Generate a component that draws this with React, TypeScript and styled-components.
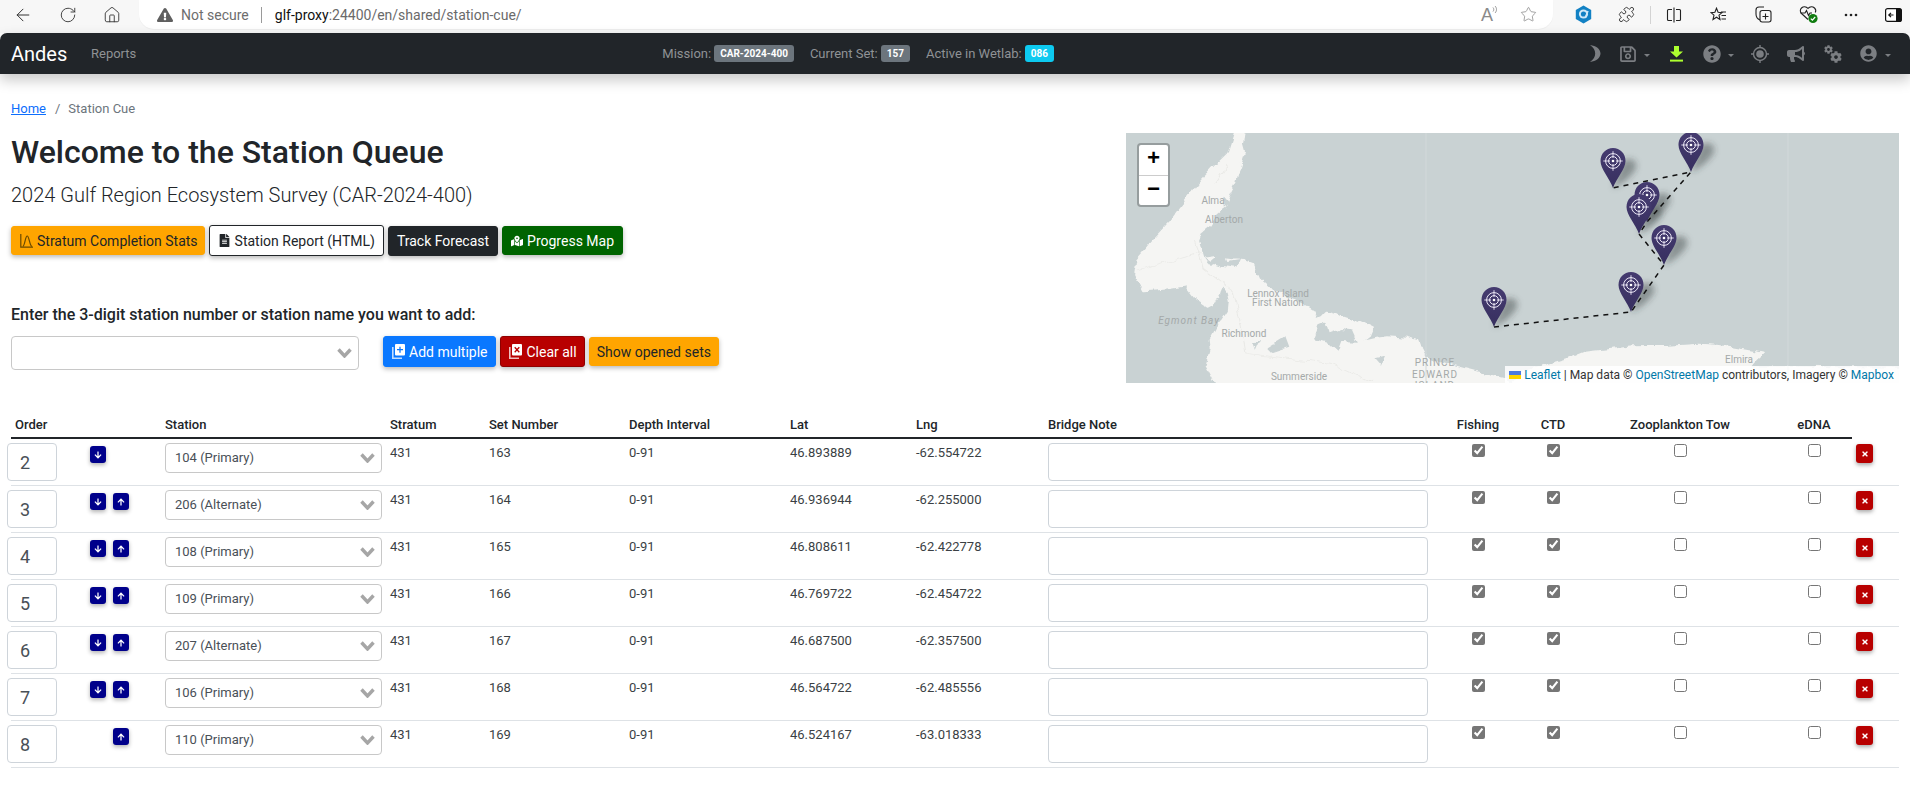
import React from "react";
import styled, { createGlobalStyle } from "styled-components";
import { ArrowLeft, RotateCw, Home as HomeIcon, Star, Puzzle } from "lucide-react";
import {
  FaRegSave, FaQuestionCircle, FaBullhorn, FaUserCircle, FaFileAlt,
  FaMapMarkedAlt, FaArrowDown, FaArrowUp, FaTimes, FaExclamationTriangle, FaCog,
} from "react-icons/fa";

const Global = createGlobalStyle`
  html, body { margin: 0; padding: 0; background: #fff; }
  body { font-family: Roboto, "Liberation Sans", sans-serif; color: #212529; overflow: hidden; }
  * { box-sizing: border-box; }
`;

const Page = styled.div`
  width: 1910px;
  height: 788px;
  overflow: hidden;
`;

/* Browser chrome */
const BrowserBar = styled.div`
  height: 33px;
  background: #f7f7f7;
  display: flex;
  align-items: flex-start;
  color: #333;
`;
const ChromeButton = styled.div<{ $w: number }>`
  width: ${(p) => p.$w}px;
  height: 29px;
  display: flex;
  align-items: center;
  justify-content: center;
  flex: none;
`;
const AddressPill = styled.div`
  margin-left: 5px;
  width: 1414px;
  height: 29px;
  background: #fff;
  border-radius: 0 0 15px 15px;
  display: flex;
  align-items: center;
  padding-left: 18px;
  flex: none;
  font-size: 14px;
  color: #6a6a6a;
  box-shadow: 0 1px 1px rgba(0, 0, 0, 0.04);
`;
const NotSecure = styled.span`
  margin-left: 8px;
  color: #6d6d6d;
  font-size: 14px;
`;
const Separator = styled.span`
  width: 1px;
  height: 16px;
  background: #9a9a9a;
  margin: 0 13px 0 12px;
`;
const Host = styled.span`
  color: #111;
  font-size: 14px;
`;
const Path = styled.span`
  color: #6a6a6a;
  font-size: 14px;
`;
const PillTools = styled.div`
  margin-left: auto;
  margin-right: 16px;
  display: flex;
  align-items: center;
  gap: 23px;
  color: #7d7d7d;
`;
const ReadA = styled.span`
  font-size: 18px;
  font-family: "Liberation Sans", sans-serif;
  color: #8a8a8a;
  position: relative;
  width: 16px;
  line-height: 20px;
`;
const ReadWaves = styled.svg`
  position: absolute;
  left: 11px;
  top: 0;
`;
const ChromeTools = styled.div`
  display: flex;
  align-items: center;
  height: 29px;
  flex: 1;
`;
const ChromeSlot = styled.div<{ $ml: number }>`
  margin-left: ${(p) => p.$ml}px;
  display: flex;
  flex: none;
`;
const ChromeDivider = styled.span`
  width: 1px;
  height: 18px;
  background: #d3d3d3;
  margin-left: 15px;
  flex: none;
`;

/* Navbar */
const Navbar = styled.nav`
  height: 41px;
  background: #212529;
  border-radius: 7px 7px 0 0;
  display: flex;
  align-items: center;
  padding-left: 11px;
  box-shadow: 0 6px 14px rgba(0, 0, 0, 0.22);
  position: relative;
`;
const Brand = styled.a`
  color: #fff;
  font-size: 20px;
  line-height: 24px;
  width: 80px;
`;
const NavLink = styled.a`
  color: #8f9295;
  font-size: 13px;
`;
const NavInfo = styled.div`
  margin-left: 526px;
  display: flex;
  align-items: center;
  color: #8f9295;
  font-size: 13px;
`;
const NavItem = styled.span`
  display: flex;
  align-items: center;
  gap: 3px;
  margin-right: 16px;
`;
const Badge = styled.span<{ $bg: string }>`
  background: ${(p) => p.$bg};
  color: #fff;
  font-size: 10px;
  font-weight: 700;
  line-height: 17px;
  height: 17px;
  padding: 0 6px;
  border-radius: 3px;
`;
const NavIcons = styled.div`
  margin-left: auto;
  padding-right: 19px;
  height: 41px;
  display: flex;
  align-items: center;
  color: #7b7e82;
`;
const NavSlot = styled.span<{ $ml: number; $fg?: string }>`
  margin-left: ${(p) => p.$ml}px;
  color: ${(p) => p.$fg || "#7b7e82"};
  display: flex;
  flex: none;
`;
const Caret = styled.span<{ $ml: number }>`
  margin-left: ${(p) => p.$ml}px;
  margin-top: 3px;
  width: 0;
  height: 0;
  border-left: 3px solid transparent;
  border-right: 3px solid transparent;
  border-top: 3px solid #7b7e82;
  flex: none;
`;
const GearPair = styled.span`
  position: relative;
  width: 18px;
  height: 18px;
  display: block;
`;
const Gear = styled(FaCog)<{ $small?: boolean }>`
  position: absolute;
  left: ${(p) => (p.$small ? 0 : 6)}px;
  top: ${(p) => (p.$small ? 0 : 6)}px;
`;

/* Content */
const Main = styled.main`
  padding: 24px 11px 0;
`;
const Crumbs = styled.div`
  display: flex;
  align-items: center;
  height: 20px;
  font-size: 13px;
  color: #6c757d;
  margin-bottom: 15px;
`;
const CrumbLink = styled.a`
  color: #0d6efd;
  text-decoration: underline;
`;
const CrumbSep = styled.span`
  margin: 0 8px 0 9px;
`;
const TopRow = styled.section`
  display: flex;
  justify-content: space-between;
  align-items: flex-start;
`;
const Intro = styled.div`
  width: 1000px;
`;
const Title = styled.h1`
  margin: 0;
  font-size: 32px;
  line-height: 38px;
  font-weight: 500;
  color: #212529;
`;
const Subtitle = styled.p`
  margin: 11px 0 0;
  font-size: 20px;
  line-height: 26px;
  font-weight: 300;
  color: #212529;
`;
const ButtonRow = styled.div<{ $top: number }>`
  display: flex;
  align-items: center;
  gap: 4px;
  margin-top: ${(p) => p.$top}px;
`;
const ActionButton = styled.button<{ $bg: string; $fg: string; $h: number; $line?: string; $pad?: string }>`
  height: ${(p) => p.$h}px;
  background: ${(p) => p.$bg};
  color: ${(p) => p.$fg};
  border: 1px solid ${(p) => p.$line || p.$bg};
  border-radius: 3px;
  padding: ${(p) => p.$pad ?? "0 8px"};
  font-family: Roboto, sans-serif;
  font-size: 14px;
  display: flex;
  align-items: center;
  gap: 4px;
  box-shadow: 0 2px 5px rgba(0, 0, 0, 0.28);
  white-space: nowrap;
  flex: none;
`;
const AddLabel = styled.label`
  display: block;
  margin-top: 48px;
  font-size: 16px;
  line-height: 22px;
  font-weight: 500;
`;
const AddRow = styled.div`
  display: flex;
  align-items: flex-start;
  margin-top: 10px;
`;
const ComboBox = styled.div<{ $w: number; $h: number }>`
  width: ${(p) => p.$w}px;
  height: ${(p) => p.$h}px;
  border: 1px solid #c8c8c8;
  border-radius: 4px;
  background: #fff;
  display: flex;
  align-items: center;
  justify-content: space-between;
  padding: 0 6px 0 9px;
  font-size: 13px;
  color: #495057;
  flex: none;
`;
const AddButtons = styled(ButtonRow)`
  margin-left: 24px;
  height: 31px;
`;
const MapPanel = styled.div`
  position: relative;
  width: 773px;
  height: 250px;
  overflow: hidden;
  background: #c9d2d3;
  flex: none;
`;
const MapSvg = styled.svg`
  display: block;
`;
const ZoomControl = styled.div`
  position: absolute;
  left: 11px;
  top: 10px;
  width: 33px;
  height: 64px;
  background: #fff;
  border: 2px solid rgba(0, 0, 0, 0.25);
  border-radius: 4px;
  display: flex;
  flex-direction: column;
  background-clip: padding-box;
`;
const ZoomButton = styled.a<{ $divider?: boolean }>`
  flex: 1;
  display: flex;
  align-items: center;
  justify-content: center;
  font: bold 22px "Liberation Mono", monospace;
  color: #000;
  border-bottom: ${(p) => (p.$divider ? "1px solid #ccc" : "0")};
`;
const Attribution = styled.div`
  position: absolute;
  right: 0;
  bottom: 0;
  height: 17px;
  width: 394px;
  background: rgba(255, 255, 255, 0.85);
  display: flex;
  align-items: center;
  justify-content: flex-end;
  gap: 3px;
  padding-right: 5px;
  font-size: 12px;
  color: #333;
  white-space: nowrap;
`;
const AttrLink = styled.a`
  color: #0078a8;
`;
const MapLabel = styled.text<{ $italic?: boolean; $spaced?: boolean }>`
  font-family: Roboto, sans-serif;
  font-size: 10px;
  fill: #a4a9a9;
  text-anchor: middle;
  font-style: ${(p) => (p.$italic ? "italic" : "normal")};
  letter-spacing: ${(p) => (p.$spaced ? "1px" : "0")};
`;

/* Table */
const QueueTable = styled.table`
  width: 1888px;
  margin-top: 29px;
  table-layout: fixed;
  border-collapse: separate;
  border-spacing: 0;
  font-size: 13px;
`;
const QueueCol = styled.col<{ $w: number }>`
  width: ${(p) => p.$w}px;
`;
const HeadCell = styled.th<{ $center?: boolean; $plain?: boolean }>`
  padding: 4px;
  height: 27px;
  font-size: 13px;
  line-height: 17px;
  font-weight: 500;
  text-align: ${(p) => (p.$center ? "center" : "left")};
  border-bottom: ${(p) => (p.$plain ? "0" : "2px solid #212529")};
  white-space: nowrap;
`;
const Cell = styled.td<{ $center?: boolean }>`
  padding: 4px;
  vertical-align: top;
  line-height: 20px;
  color: #3a3f44;
  text-align: ${(p) => (p.$center ? "center" : "left")};
  border-bottom: 1px solid #dee2e6;
`;
const OrderInput = styled.input`
  display: block;
  width: 50px;
  height: 38px;
  margin-left: -8px;
  padding: 0 12px;
  border: 1px solid #ced4da;
  border-radius: 4px;
  font-family: Roboto, sans-serif;
  font-size: 18px;
  color: #495057;
`;
const MoveGroup = styled.div`
  display: flex;
  margin-top: 3px;
`;
const MoveButton = styled.button<{ $hidden?: boolean }>`
  width: 16px;
  height: 17px;
  padding: 0;
  border: 0;
  border-radius: 3px;
  background: #00008b;
  color: #fff;
  display: flex;
  align-items: center;
  justify-content: center;
  margin-right: 7px;
  box-shadow: 0 2px 4px rgba(0, 0, 0, 0.3);
  visibility: ${(p) => (p.$hidden ? "hidden" : "visible")};
`;
const NoteBox = styled.textarea`
  display: block;
  width: 380px;
  height: 38px;
  border: 1px solid #ced4da;
  border-radius: 4px;
  resize: none;
`;
const Check = styled.input`
  display: block;
  width: 13px;
  height: 13px;
  margin: 1px auto 0;
  accent-color: #767676;
`;
const DeleteButton = styled.button`
  width: 17px;
  height: 19px;
  margin-top: 1px;
  padding: 0;
  border: 0;
  border-radius: 3px;
  background: #b80000;
  color: #fff;
  display: flex;
  align-items: center;
  justify-content: center;
  box-shadow: 0 2px 4px rgba(0, 0, 0, 0.35);
`;

const Chevron = () => (
  <svg width="15" height="10" viewBox="0 0 15 10">
    <path d="M1.5 1.5 L7.5 8 L13.5 1.5" fill="none" stroke="#a6a6a6" strokeWidth="3.4" />
  </svg>
);

const StatsIcon = () => (
  <svg width="13" height="14" viewBox="0 0 13 14" fill="none" stroke="#6b4a00" strokeWidth="1.2">
    <path d="M.8 0V13.2H13" />
    <path d="M2.8 12.5C5 12 5.2 2 7.2 2S9.6 12 12 12.5" />
  </svg>
);
const StackIcon = ({ mark }: { mark: "plus" | "x" }) => (
  <svg width="13" height="15" viewBox="0 0 13 15">
    <path d="M.8 3V14.2H10" fill="none" stroke="currentColor" strokeWidth="1.6" opacity="0.75" />
    <rect x="3" y="0" width="10" height="11.5" rx="1" fill="currentColor" />
    {mark === "plus" ? (
      <path d="M8 2.7V8.7M5 5.7H11" stroke="#0a78ff" strokeWidth="1.3" />
    ) : (
      <path d="M5.7 3.2L10.3 8.2M10.3 3.2L5.7 8.2" stroke="#b80000" strokeWidth="1.3" />
    )}
  </svg>
);
const MoonIcon = () => (
  <svg width="12" height="17" viewBox="0 0 12 17">
    <path d="M1 0C7 .8 11.5 4 11.5 8.5S7 16.2 1 17C4.6 14.6 6.2 11.4 6.2 8.5S4.6 2.4 1 0Z" fill="currentColor" />
  </svg>
);
const DownloadIcon = () => (
  <svg width="13" height="16" viewBox="0 0 13 16" fill="currentColor">
    <path d="M4 0H9V5.5H13L6.5 11.5L0 5.5H4Z" />
    <rect x="0" y="13.6" width="13" height="2" />
  </svg>
);
const TargetIcon = () => (
  <svg width="18" height="18" viewBox="0 0 18 18" fill="none" stroke="currentColor">
    <circle cx="9" cy="9" r="6.5" strokeWidth="1.4" />
    <circle cx="9" cy="9" r="3.8" fill="currentColor" stroke="none" />
    <path d="M9 0V3M9 15V18M0 9H3M15 9H18" strokeWidth="1.4" />
  </svg>
);
const SplitIcon = () => (
  <svg width="16" height="16" viewBox="0 0 16 16" fill="none" stroke="#222" strokeWidth="1.1">
    <path d="M6 2.5H2.5a1 1 0 0 0-1 1v9a1 1 0 0 0 1 1H6M10 2.5h3.5a1 1 0 0 1 1 1v9a1 1 0 0 1-1 1H10M8 .5v15" />
  </svg>
);
const FavIcon = () => (
  <svg width="17" height="16" viewBox="0 0 17 16" fill="none" stroke="#222" strokeWidth="1.1">
    <path d="M6.5 1.2L8.1 5.2L12 5.6L9 8.2L10 12.5L6.5 10.2L3 12.5L4 8.2L1 5.6L4.9 5.2Z" />
    <path d="M11 5H16M11.5 8.5H16M11.5 12H16" />
  </svg>
);
const CollectIcon = () => (
  <svg width="17" height="17" viewBox="0 0 17 17" fill="none" stroke="#222" strokeWidth="1.1">
    <path d="M5 14C2.5 13 1 11 1 8V4a3 3 0 0 1 3-3h5" />
    <rect x="5" y="4.5" width="11" height="11.5" rx="2.2" />
    <path d="M10.5 7.5v6M7.5 10.5h6" />
  </svg>
);
const HeartIcon = () => (
  <svg width="19" height="19" viewBox="0 0 19 19" fill="none" stroke="#222" strokeWidth="1.1">
    <path d="M9 14.5L2.5 8.5a3.8 3.8 0 0 1 0-5.5c1.8-1.6 4.6-1.6 6.5.4 1.9-2 4.7-2 6.5-.4a3.8 3.8 0 0 1 .8 4.5" />
    <path d="M1.5 8H6L7.5 5.5L9.5 10.5L11 8H13" />
    <circle cx="14" cy="13.5" r="4.6" fill="#107c10" stroke="none" />
    <path d="M11.8 13.6L13.4 15.2L16.2 12" stroke="#fff" strokeWidth="1.2" />
  </svg>
);
const DotsIcon = () => (
  <svg width="14" height="4" viewBox="0 0 14 4" fill="#222">
    <circle cx="2" cy="2" r="1.3" /><circle cx="7" cy="2" r="1.3" /><circle cx="12" cy="2" r="1.3" />
  </svg>
);
const SidebarIcon = () => (
  <svg width="17" height="14" viewBox="0 0 17 14">
    <rect x="0.6" y="0.6" width="15.8" height="12.8" rx="2" fill="#fff" stroke="#111" strokeWidth="1.2" />
    <path d="M11 .6h3.5a2 2 0 0 1 2 2v8.8a2 2 0 0 1-2 2H11Z" fill="#111" />
    <path d="M8.5 7H4M6 4.8L3.8 7L6 9.2" fill="none" stroke="#111" strokeWidth="1.2" />
  </svg>
);
const HexIcon = () => (
  <svg width="17" height="19" viewBox="0 0 17 19">
    <path d="M8.5 0.5L16.2 5V14L8.5 18.5L.8 14V5Z" fill="#1281c4" />
    <circle cx="8.5" cy="9" r="4.6" fill="#cfe8f7" />
    <circle cx="8.5" cy="9" r="2.6" fill="#1281c4" />
    <path d="M10 13L13 6" stroke="#cfe8f7" strokeWidth="1.5" />
  </svg>
);

const markers = [
  { x: 368, y: 194 },
  { x: 487, y: 55 },
  { x: 565, y: 39 },
  { x: 521, y: 89 },
  { x: 513, y: 101 },
  { x: 538, y: 132 },
  { x: 505, y: 179 },
];

const Pin = ({ x, y }: { x: number; y: number }) => (
  <g transform={`translate(${x - 12.5} ${y - 40})`}>
    <path d="M12.5 0C19.5 0 25 5.5 25 13C25 21 16 30 12.5 40C9 30 0 21 0 13C0 5.5 5.5 0 12.5 0Z" fill="url(#pinFill)" />
    <g fill="none" stroke="#eeeaf8">
      <circle cx="12.5" cy="13" r="7.4" strokeWidth="1" />
      <circle cx="12.5" cy="13" r="4.4" strokeWidth="1" />
      <path d="M12.5 3.2V10M12.5 16V22.8M2.8 13H9.5M15.5 13H22.2" strokeWidth="0.9" />
    </g>
    <circle cx="12.5" cy="13" r="1.3" fill="#fff" />
  </g>
);
const PinShadow = ({ x, y }: { x: number; y: number }) => (
  <path
    transform={`translate(${x} ${y})`}
    d="M0 0L9 -26C16 -32 25 -28 23 -20C19 -11 7 -3 0 0Z"
    fill="rgba(50,55,55,.42)"
    filter="url(#blur)"
  />
);

const MapArt = () => (
  <MapSvg width="773" height="250" viewBox="0 0 773 250">
    <defs>
      <linearGradient id="pinFill" x1="0" y1="0" x2="0" y2="1">
        <stop offset="0" stopColor="#453b70" />
        <stop offset="1" stopColor="#372f5f" />
      </linearGradient>
      <filter id="blur" x="-50%" y="-50%" width="200%" height="200%">
        <feGaussianBlur stdDeviation="3" />
      </filter>
      <filter id="coast" x="0" y="0" width="773" height="250" filterUnits="userSpaceOnUse">
        <feTurbulence type="fractalNoise" baseFrequency="0.09" numOctaves="3" seed="7" result="noise" />
        <feDisplacementMap in="SourceGraphic" in2="noise" scale="7" xChannelSelector="R" yChannelSelector="G" />
        <feGaussianBlur stdDeviation="0.35" />
      </filter>
    </defs>
    <g filter="url(#coast)">
      <g transform="translate(-6 -8) scale(0.5038 0.3333)" fill="#f5f5f3" stroke="#f5f5f3" strokeWidth="4" strokeLinejoin="round">
        <path d="M228 24H247L244 62L248 84L238 130L232 150L228 175L218 205L210 245L190 270L178 300L160 322L155 345L166 400L190 395L222 402L246 404L262 412L270 440L276 462L296 488L312 502L336 516L352 532L372 548L385 560L392 582L402 575L410 562L440 574L472 590L502 612L496 634L482 650L510 640L532 636L568 640L592 650L598 674L604 692L630 708L662 722L720 745L765 762L772 790H196L172 720L180 678L178 650L192 610L204 586L216 558L218 530L214 502L205 482L198 505L195 520L170 540L150 520L130 482L90 492L46 497L30 450L35 400L66 345L100 290L118 252L130 230L160 170L190 122L215 85Z" />
        <path d="M770 790L800 740L888 702L922 682L970 674L1020 666L1090 664L1150 658L1190 662L1220 670L1276 685L1262 704L1250 726L1546 730V790Z" />
      </g>
      <g transform="translate(-6 -8) scale(0.5038 0.3333)" fill="#c9d2d3">
        <path d="M168 398L180 410L205 378L213 408L238 402L230 428L205 423L190 416L180 423Z" />
        <path d="M385 640L394 604L410 594L416 625L440 612L460 616L470 650L440 648L432 680L410 650Z" />
        <path d="M262 650L278 642L268 676Z" />
        <path d="M205 212L216 232L208 248Z" />
        <path d="M505 700L526 692L518 722Z" />
        <path d="M292 668L326 636L334 668L302 684Z" />
      </g>
      <g transform="translate(-6 -8) scale(0.5038 0.3333)" fill="none" stroke="#e9e9e6" strokeWidth="2">
        <path d="M150 345L165 430L225 500L240 600L250 685L420 715L500 770" />
        <path d="M35 435L160 380" />
        <path d="M190 175L215 120" />
      </g>
    </g>
    <path d="M300 0V250M662 0V250" stroke="#d2d9da" strokeWidth="1" />
    <MapLabel x="87" y="71">Alma</MapLabel>
    <MapLabel x="98" y="90">Alberton</MapLabel>
    <MapLabel x="152" y="164">Lennox Island</MapLabel>
    <MapLabel x="152" y="173">First Nation</MapLabel>
    <MapLabel x="63" y="191" $italic $spaced>Egmont Bay</MapLabel>
    <MapLabel x="118" y="204">Richmond</MapLabel>
    <MapLabel x="173" y="247">Summerside</MapLabel>
    <MapLabel x="309" y="233" $spaced>PRINCE</MapLabel>
    <MapLabel x="309" y="245" $spaced>EDWARD</MapLabel>
    <MapLabel x="309" y="256" $spaced>ISLAND</MapLabel>
    <MapLabel x="613" y="230">Elmira</MapLabel>
    {markers.map((m, i) => <PinShadow key={i} x={m.x} y={m.y} />)}
    <polyline
      points="368,194 505,179 538,132 513,101 521,89 565,39 487,55"
      fill="none"
      stroke="#111"
      strokeWidth="1.5"
      strokeDasharray="5 5"
    />
    <Pin x={521} y={89} />
    <Pin x={487} y={55} />
    <Pin x={565} y={39} />
    <Pin x={513} y={101} />
    <Pin x={538} y={132} />
    <Pin x={505} y={179} />
    <Pin x={368} y={194} />
  </MapSvg>
);

const FlagIcon = () => (
  <svg width="12" height="8" viewBox="0 0 12 8">
    <rect width="12" height="4" fill="#4c7be1" />
    <rect y="4" width="12" height="4" fill="#ffd500" />
  </svg>
);

const rows = [
  { order: 2, station: "104 (Primary)", set: 163, lat: "46.893889", lng: "-62.554722", down: true, up: false },
  { order: 3, station: "206 (Alternate)", set: 164, lat: "46.936944", lng: "-62.255000", down: true, up: true },
  { order: 4, station: "108 (Primary)", set: 165, lat: "46.808611", lng: "-62.422778", down: true, up: true },
  { order: 5, station: "109 (Primary)", set: 166, lat: "46.769722", lng: "-62.454722", down: true, up: true },
  { order: 6, station: "207 (Alternate)", set: 167, lat: "46.687500", lng: "-62.357500", down: true, up: true },
  { order: 7, station: "106 (Primary)", set: 168, lat: "46.564722", lng: "-62.485556", down: true, up: true },
  { order: 8, station: "110 (Primary)", set: 169, lat: "46.524167", lng: "-63.018333", down: false, up: true },
];
const colWidths = [75, 75, 225, 99, 140, 161, 126, 132, 390, 88, 62, 192, 76, 47];

export default function App() {
  return (
    <Page>
      <Global />
      <BrowserBar>
        <ChromeButton $w={46}><ArrowLeft size={20} strokeWidth={1.2} /></ChromeButton>
        <ChromeButton $w={44}><RotateCw size={18} strokeWidth={1.2} /></ChromeButton>
        <ChromeButton $w={44}><HomeIcon size={18} strokeWidth={1.2} /></ChromeButton>
        <AddressPill>
          <FaExclamationTriangle size={16} color="#5f5f5f" />
          <NotSecure>Not secure</NotSecure>
          <Separator />
          <Host>glf-proxy</Host>
          <Path>:24400/en/shared/station-cue/</Path>
          <PillTools>
            <ReadA>
              A
              <ReadWaves width="6" height="9" viewBox="0 0 6 9" fill="none" stroke="#8a8a8a" strokeWidth="0.9">
                <path d="M1 6.5C2 5.5 2 3.5 1 2.5M3 8C5 6 5 3 3 1" />
              </ReadWaves>
            </ReadA>
            <Star size={17} strokeWidth={1} />
          </PillTools>
        </AddressPill>
        <ChromeTools>
          <ChromeSlot $ml={22}><HexIcon /></ChromeSlot>
          <ChromeSlot $ml={26}><Puzzle size={17} strokeWidth={1.2} color="#222" /></ChromeSlot>
          <ChromeDivider />
          <ChromeSlot $ml={15}><SplitIcon /></ChromeSlot>
          <ChromeSlot $ml={28}><FavIcon /></ChromeSlot>
          <ChromeSlot $ml={28}><CollectIcon /></ChromeSlot>
          <ChromeSlot $ml={27}><HeartIcon /></ChromeSlot>
          <ChromeSlot $ml={26}><DotsIcon /></ChromeSlot>
          <ChromeSlot $ml={27}><SidebarIcon /></ChromeSlot>
        </ChromeTools>
      </BrowserBar>

      <Navbar>
        <Brand>Andes</Brand>
        <NavLink>Reports</NavLink>
        <NavInfo>
          <NavItem>Mission: <Badge $bg="#6c757d">CAR-2024-400</Badge></NavItem>
          <NavItem>Current Set: <Badge $bg="#6c757d">157</Badge></NavItem>
          <NavItem>Active in Wetlab: <Badge $bg="#0dcaf0">086</Badge></NavItem>
        </NavInfo>
        <NavIcons>
          <NavSlot $ml={0}><MoonIcon /></NavSlot>
          <NavSlot $ml={18}><FaRegSave size={18} /></NavSlot>
          <Caret $ml={7} />
          <NavSlot $ml={20} $fg="#adff2f"><DownloadIcon /></NavSlot>
          <NavSlot $ml={20}><FaQuestionCircle size={18} /></NavSlot>
          <Caret $ml={7} />
          <NavSlot $ml={17}><TargetIcon /></NavSlot>
          <NavSlot $ml={18}><FaBullhorn size={18} /></NavSlot>
          <NavSlot $ml={19}>
            <GearPair>
              <Gear size={9} $small />
              <Gear size={12} />
            </GearPair>
          </NavSlot>
          <NavSlot $ml={18}><FaUserCircle size={17} /></NavSlot>
          <Caret $ml={8} />
        </NavIcons>
      </Navbar>

      <Main>
        <Crumbs>
          <CrumbLink>Home</CrumbLink>
          <CrumbSep>/</CrumbSep>
          <span>Station Cue</span>
        </Crumbs>
        <TopRow>
          <Intro>
            <Title>Welcome to the Station Queue</Title>
            <Subtitle>2024 Gulf Region Ecosystem Survey (CAR-2024-400)</Subtitle>
            <ButtonRow $top={17}>
              <ActionButton $bg="#ffa500" $fg="#212529" $h={29} $pad="0 6px 0 8px"><StatsIcon />Stratum Completion Stats</ActionButton>
              <ActionButton $bg="#fff" $fg="#212529" $h={31} $line="#212529"><FaFileAlt size={13} />Station Report (HTML)</ActionButton>
              <ActionButton $bg="#212529" $fg="#fff" $h={30}>Track Forecast</ActionButton>
              <ActionButton $bg="#006400" $fg="#fff" $h={29}><FaMapMarkedAlt size={12} />Progress Map</ActionButton>
            </ButtonRow>
            <AddLabel>Enter the 3-digit station number or station name you want to add:</AddLabel>
            <AddRow>
              <ComboBox $w={348} $h={34}><span /><Chevron /></ComboBox>
              <AddButtons $top={0}>
                <ActionButton $bg="#0a78ff" $fg="#fff" $h={31}><StackIcon mark="plus" />Add multiple</ActionButton>
                <ActionButton $bg="#b80000" $fg="#fff" $h={31} $line="#8f0000" $pad="0 7px 0 8px"><StackIcon mark="x" />Clear all</ActionButton>
                <ActionButton $bg="#ffa500" $fg="#212529" $h={29} $pad="0 7px">Show opened sets</ActionButton>
              </AddButtons>
            </AddRow>
          </Intro>
          <MapPanel>
            <MapArt />
            <ZoomControl>
              <ZoomButton $divider>+</ZoomButton>
              <ZoomButton>−</ZoomButton>
            </ZoomControl>
            <Attribution>
              <FlagIcon />
              <AttrLink>Leaflet</AttrLink> | Map data © <AttrLink>OpenStreetMap</AttrLink> contributors, Imagery © <AttrLink>Mapbox</AttrLink>
            </Attribution>
          </MapPanel>
        </TopRow>

        <QueueTable>
          <colgroup>
            {colWidths.map((w, i) => <QueueCol key={i} $w={w} />)}
          </colgroup>
          <thead>
            <tr>
              <HeadCell>Order</HeadCell>
              <HeadCell />
              <HeadCell>Station</HeadCell>
              <HeadCell>Stratum</HeadCell>
              <HeadCell>Set Number</HeadCell>
              <HeadCell>Depth Interval</HeadCell>
              <HeadCell>Lat</HeadCell>
              <HeadCell>Lng</HeadCell>
              <HeadCell>Bridge Note</HeadCell>
              <HeadCell $center>Fishing</HeadCell>
              <HeadCell $center>CTD</HeadCell>
              <HeadCell $center>Zooplankton Tow</HeadCell>
              <HeadCell $center>eDNA</HeadCell>
              <HeadCell $plain />
            </tr>
          </thead>
          <tbody>
            {rows.map((r) => (
              <tr key={r.order}>
                <Cell><OrderInput defaultValue={r.order} /></Cell>
                <Cell>
                  <MoveGroup>
                    <MoveButton $hidden={!r.down}><FaArrowDown size={8} /></MoveButton>
                    <MoveButton $hidden={!r.up}><FaArrowUp size={8} /></MoveButton>
                  </MoveGroup>
                </Cell>
                <Cell><ComboBox $w={217} $h={30}>{r.station}<Chevron /></ComboBox></Cell>
                <Cell>431</Cell>
                <Cell>{r.set}</Cell>
                <Cell>0-91</Cell>
                <Cell>{r.lat}</Cell>
                <Cell>{r.lng}</Cell>
                <Cell><NoteBox /></Cell>
                <Cell $center><Check type="checkbox" defaultChecked /></Cell>
                <Cell $center><Check type="checkbox" defaultChecked /></Cell>
                <Cell $center><Check type="checkbox" /></Cell>
                <Cell $center><Check type="checkbox" /></Cell>
                <Cell><DeleteButton><FaTimes size={8} /></DeleteButton></Cell>
              </tr>
            ))}
          </tbody>
        </QueueTable>
      </Main>
    </Page>
  );
}
